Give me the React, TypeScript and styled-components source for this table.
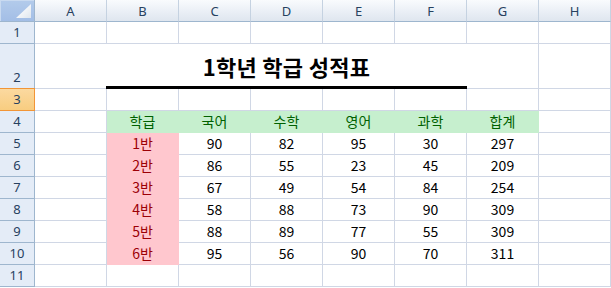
import styled, { createGlobalStyle } from 'styled-components';

const GlobalStyle = createGlobalStyle`
  html, body {
    margin: 0;
    padding: 0;
    background: #ffffff;
    overflow: hidden;
  }
`;

const StyledSheet = styled.div`
  display: grid;
  grid-template-columns: 35px repeat(8, 72px);
  grid-template-rows: 22px 22px 45px repeat(9, 22px);
  font-family: 'Noto Sans CJK KR', 'Noto Sans', sans-serif;
  font-size: 14px;
  color: #000000;
  background: #ffffff;
`;

const Corner = styled.div`
  position: relative;
  box-sizing: border-box;
  background: linear-gradient(#b3cbeb, #a3bee6);
  border-right: 1px solid #9eb6ce;
  border-bottom: 1px solid #9eb6ce;
  box-shadow: inset 1px 1px 0 #c9daf0;

  &::after {
    content: '';
    position: absolute;
    right: 3px;
    bottom: 3px;
    width: 15px;
    height: 14px;
    background: linear-gradient(135deg, #ffffff 20%, #dfe6ee);
    clip-path: polygon(100% 0, 100% 100%, 0 100%);
  }
`;

const ColHeader = styled.div`
  box-sizing: border-box;
  display: flex;
  align-items: center;
  justify-content: center;
  background: linear-gradient(#f9fbfd, #e9eef5 60%, #dfe6ef);
  border-right: 1px solid #c5d2e1;
  border-bottom: 1px solid #9eb6ce;
  font-family: 'Noto Sans', 'Liberation Sans', sans-serif;
  font-size: 13px;
  color: #27415f;
`;

const RowHeader = styled.div<{ $active?: boolean }>`
  box-sizing: border-box;
  display: flex;
  align-items: flex-end;
  justify-content: center;
  padding-bottom: 2px;
  background: ${(p) => (p.$active ? 'linear-gradient(#fbd9a0, #f8cd80)' : '#e4ecf7')};
  border-right: 1px solid ${(p) => (p.$active ? '#f29536' : '#9eb6ce')};
  border-bottom: 1px solid ${(p) => (p.$active ? '#f29536' : '#9eb6ce')};
  box-shadow: ${(p) => (p.$active ? '0 -1px 0 #f29536' : 'none')};
  font-family: 'Noto Sans', 'Liberation Sans', sans-serif;
  font-size: 13px;
  line-height: 17px;
  color: #27415f;
`;

type Fill = 'green' | 'pink';

const fills: Record<Fill, { bg: string; fg: string }> = {
  green: { bg: '#c6efce', fg: '#006100' },
  pink: { bg: '#ffc7ce', fg: '#9c0006' },
};

const Cell = styled.div<{ $fill?: Fill }>`
  box-sizing: border-box;
  display: flex;
  align-items: flex-end;
  justify-content: center;
  padding-bottom: 1px;
  line-height: 19px;
  border-right: 1px solid ${(p) => (p.$fill ? 'transparent' : '#d0d7e5')};
  border-bottom: 1px solid ${(p) => (p.$fill ? 'transparent' : '#d0d7e5')};
  background: ${(p) => (p.$fill ? fills[p.$fill].bg : '#ffffff')};
  color: ${(p) => (p.$fill ? fills[p.$fill].fg : '#000000')};
`;

const TitleCell = styled.div`
  grid-column: span 5;
  box-sizing: border-box;
  display: flex;
  align-items: center;
  justify-content: center;
  margin-left: -1px;
  padding-top: 2px;
  border-bottom: 3px solid #000000;
  font-size: 22px;
  font-weight: 700;
  letter-spacing: 0.3px;
  background: #ffffff;
`;

const columns = ['A', 'B', 'C', 'D', 'E', 'F', 'G', 'H'];
const subjects = ['학급', '국어', '수학', '영어', '과학', '합계'];
const scores = [
  ['1반', 90, 82, 95, 30, 297],
  ['2반', 86, 55, 23, 45, 209],
  ['3반', 67, 49, 54, 84, 254],
  ['4반', 58, 88, 73, 90, 309],
  ['5반', 88, 89, 77, 55, 309],
  ['6반', 95, 56, 90, 70, 311],
];

const EmptyRow = ({ n, active }: { n: number; active?: boolean }) => (
  <>
    <RowHeader $active={active}>{n}</RowHeader>
    {columns.map((c) => (
      <Cell key={c} />
    ))}
  </>
);

const App = () => (
  <>
    <GlobalStyle />
    <StyledSheet>
      <Corner />
      {columns.map((c) => (
        <ColHeader key={c}>{c}</ColHeader>
      ))}

      <EmptyRow n={1} />

      <RowHeader>2</RowHeader>
      <Cell />
      <TitleCell>1학년 학급 성적표</TitleCell>
      <Cell />
      <Cell />

      <EmptyRow n={3} active />

      <RowHeader>4</RowHeader>
      <Cell />
      {subjects.map((s) => (
        <Cell key={s} $fill="green">
          {s}
        </Cell>
      ))}
      <Cell />

      {scores.map((row, i) => (
        <div key={i} style={{ display: 'contents' }}>
          <RowHeader>{i + 5}</RowHeader>
          <Cell />
          {row.map((v, j) => (
            <Cell key={j} $fill={j === 0 ? 'pink' : undefined}>
              {v}
            </Cell>
          ))}
          <Cell />
        </div>
      ))}

      <EmptyRow n={11} />
    </StyledSheet>
  </>
);

export default App;
